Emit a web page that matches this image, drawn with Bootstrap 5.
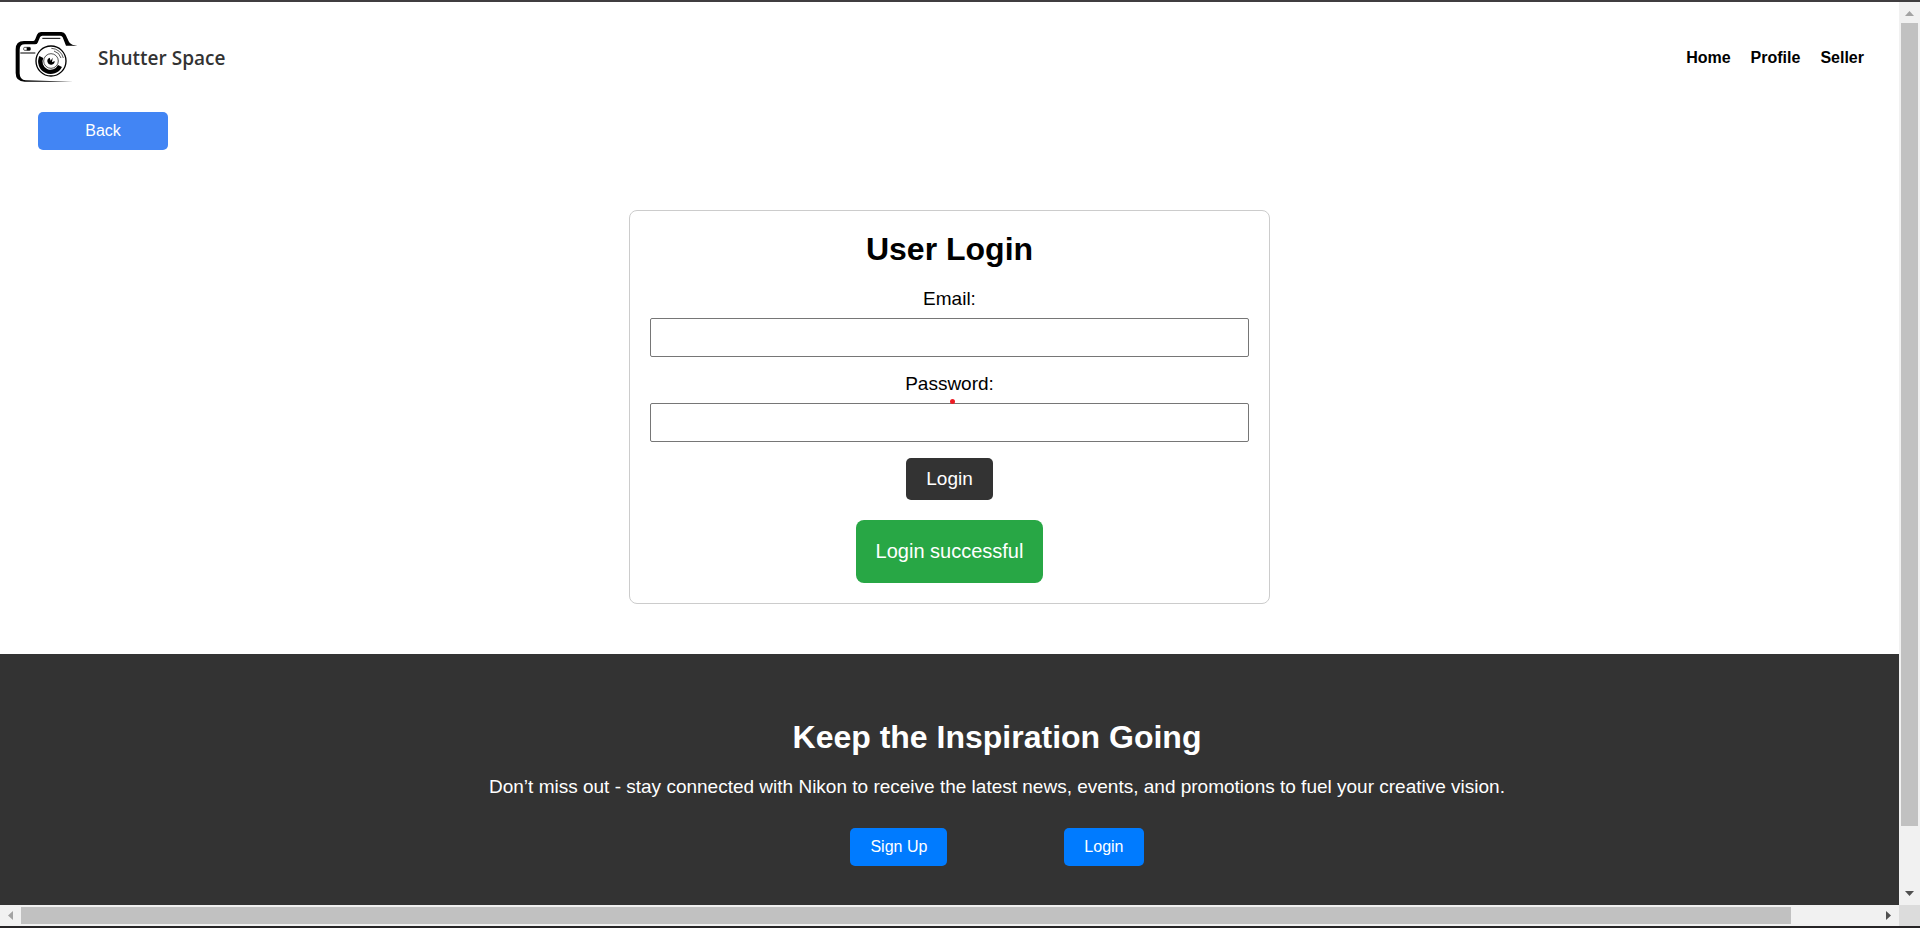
<!DOCTYPE html>
<html lang="en">
<head>
<meta charset="utf-8">
<meta name="viewport" content="width=device-width, initial-scale=1">
<title>Shutter Space - User Login</title>
<link href="https://cdn.jsdelivr.net/npm/bootstrap@5.3.0/dist/css/bootstrap.min.css" rel="stylesheet">
<style>
  body { font-family: "Liberation Sans", Arial, sans-serif; color: #000; background: #fff; }
  .window-frame {
    display: grid; height: 100vh;
    grid-template: minmax(0, 1fr) 21px / minmax(0, 1fr) 21px;
    border-top: 2px solid #403e40; border-bottom: 2px solid #262426;
  }
  .site-header { height: 110px; padding: 2px 35px 0 8px; }
  .brand-logo { width: 74px; height: 66px; margin-bottom: 6px; }
  .brand-name { font: 600 19px/26px "Open Sans", sans-serif; color: #333; margin-left: 16px; }
  .site-links { gap: 20px; }
  .site-links .nav-link { padding: 0; color: #000; font-weight: 700; line-height: 20px; }
  .btn { --bs-btn-border-width: 0; --bs-btn-border-radius: 5px; --bs-btn-color: #fff; --bs-btn-hover-color: #fff; line-height: 18px; padding: 10px 20px; }
  .btn-back { --bs-btn-bg: #4285f4; --bs-btn-hover-bg: #3367d6; width: 130px; margin-left: 38px; }
  .btn-submit { --bs-btn-bg: #333; --bs-btn-hover-bg: #555; font-size: 19px; line-height: 22px; }
  .btn-footer { --bs-btn-bg: #007bff; --bs-btn-hover-bg: #0069d9; }
  .login-card { max-width: 641px; margin-top: 60px; margin-bottom: 50px; padding: 20px; border: 1px solid #ccc; border-radius: 8px; }
  .page-title { font-size: 32px; line-height: 36px; font-weight: 700; margin-bottom: 21px; }
  .field-label { display: block; font-size: 19px; line-height: 22px; margin-bottom: 8px; }
  .field-input { height: 39px; padding: 8px; border: 1px solid #767676; border-radius: 2px; margin-bottom: 16px; }
  .red-dot { width: 5px; height: 5px; background: #ed1c24; bottom: -9px; left: 50%; }
  .login-note { font-size: 20px; line-height: 23px; padding: 20px; margin-top: 20px; background: #28a745; color: #fff; border-radius: 8px; }
  .site-footer { background: #333; color: #fff; padding: 65px 0 39px 5%; }
  .footer-text { font-size: 19px; line-height: 22px; margin-bottom: 30px; }
  .footer-actions { gap: 117px; }
  .bar-track { background: #f1f1f1; }
  .bar-track svg { width: 21px; height: 21px; flex: none; }
  .bar-thumb { background: #c1c1c1; }
  .bar-corner { background: #dcdcdc; }
</style>
</head>
<body>
<div class="window-frame">
  <div class="d-flex flex-column overflow-hidden">
    <header class="site-header d-flex align-items-center flex-shrink-0">
      <svg class="brand-logo" viewBox="0 0 222 198" role="img" aria-label="Camera logo">
        <path d="M196 179 L50 179 Q23 179 23 153 V82 Q23 57 48 57 H76 Q80 57 82 51 L87 38 Q90 30 99 30 H160 Q169 30 173 38 L182 58 Q185 66 193 68 L208 71 L174 71 L164 46 Q162 41 157 41 H103 Q98 41 96 46 L89 62 Q87 67 81 67 H51 Q35 67 35 83 V154 Q35 174 53 175 Z"/>
        <path d="M103 49 H157 M37 93 H82" fill="none" stroke="#000" stroke-width="3"/>
        <rect x="47" y="76" width="20" height="9" rx="3" fill="none" stroke="#000" stroke-width="2"/>
        <path d="M56 76h11v9H56z"/>
        <circle cx="129" cy="117" r="45" fill="#fff" stroke="#000" stroke-width="4"/>
        <path d="M100 105 A31 31 0 0 0 156 132" fill="none" stroke="#000" stroke-width="13"/>
        <circle cx="129" cy="117" r="22" fill="#fff" stroke="#000" stroke-width="2"/>
        <path d="M130 79 A38 38 0 0 1 166 108 M138 87 A31 31 0 0 1 159 108" fill="none" stroke="#000" stroke-width="2"/>
        <path d="M125 107 A11 11 0 1 0 140 117 L132 121 L134 107 L128 116 Z"/>
      </svg>
      <span class="brand-name">Shutter Space</span>
      <nav class="site-links nav ms-auto" aria-label="Main">
        <a class="nav-link" href="#home">Home</a>
        <a class="nav-link" href="#profile">Profile</a>
        <a class="nav-link" href="#seller">Seller</a>
      </nav>
    </header>

    <main class="d-flex flex-column flex-shrink-0">
      <button type="button" class="btn btn-back">Back</button>
      <form class="login-card w-100 mx-auto text-center">
        <h1 class="page-title">User Login</h1>
        <label class="field-label" for="email">Email:</label>
        <input class="field-input d-block w-100" type="email" id="email">
        <div class="position-relative">
          <label class="field-label" for="password">Password:</label>
          <span class="red-dot position-absolute rounded-circle"></span>
        </div>
        <input class="field-input d-block w-100" type="password" id="password">
        <button type="submit" class="btn btn-submit">Login</button>
        <div><div class="login-note d-inline-block align-top" role="status">Login successful</div></div>
      </form>
    </main>

    <footer class="site-footer flex-grow-1 flex-shrink-0 text-center">
      <h2 class="page-title">Keep the Inspiration Going</h2>
      <p class="footer-text">Don’t miss out - stay connected with Nikon to receive the latest news, events, and promotions to fuel your creative vision.</p>
      <div class="footer-actions d-flex justify-content-center">
        <button type="button" class="btn btn-footer">Sign Up</button>
        <button type="button" class="btn btn-footer">Login</button>
      </div>
    </footer>
  </div>

  <div class="bar-track d-flex flex-column" aria-hidden="true">
    <svg viewBox="0 0 21 21"><path d="M6 14h9l-4.500-5z" fill="#a3a3a3"/></svg>
    <div class="flex-grow-1"><div class="bar-thumb mx-auto" style="width:17px;height:93.3%"></div></div>
    <svg viewBox="0 0 21 21"><path d="M6 7h9l-4.500 5z" fill="#505050"/></svg>
  </div>
  <div class="bar-track d-flex align-items-center" aria-hidden="true">
    <svg viewBox="0 0 21 21"><path d="M13 6v9l-5-4.500z" fill="#a3a3a3"/></svg>
    <div class="flex-grow-1"><div class="bar-thumb" style="height:17px;width:95.3%"></div></div>
    <svg viewBox="0 0 21 21"><path d="M8 6v9l5-4.500z" fill="#505050"/></svg>
  </div>
  <div class="bar-corner"></div>
</div>
<script src="https://cdn.jsdelivr.net/npm/bootstrap@5.3.0/dist/js/bootstrap.bundle.min.js"></script>
</body>
</html>
